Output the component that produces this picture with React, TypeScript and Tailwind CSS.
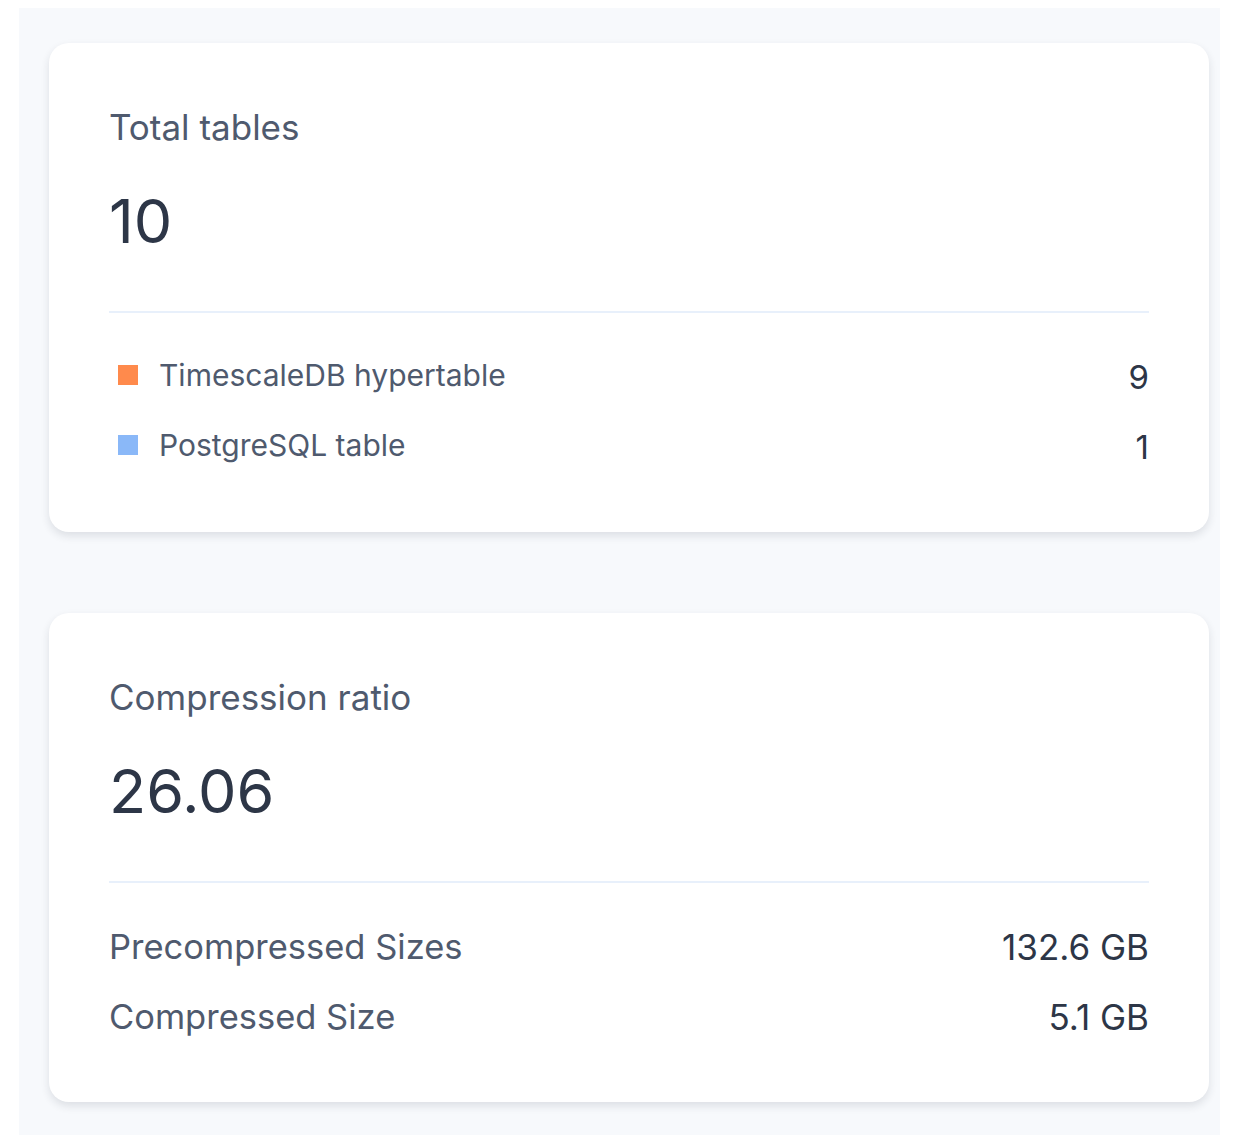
import React from 'react';

interface LegendRow {
  label: string;
  value: string;
  color?: string;
}

interface StatCardProps {
  title: string;
  value: string;
  rows: LegendRow[];
}

const StatCard: React.FC<StatCardProps> = ({ title, value, rows }) => {
  const hasLegend = rows.some((r) => r.color);
  return (
    <div
      className={
        hasLegend
          ? 'rounded-[20px] bg-white px-[60px] pb-[67px] pt-[64px] shadow-[0_4px_8px_rgba(30,41,59,0.12)]'
          : 'rounded-[20px] bg-white px-[60px] pb-[65px] pt-[64px] shadow-[0_4px_8px_rgba(30,41,59,0.12)]'
      }
    >
      <p className="text-[35px] leading-[40px] text-[#4f5a6e]">{title}</p>
      <h4 className="mt-[38px] text-[61px] leading-[72px] text-[#2d3647]">{value}</h4>
      <div className="mt-[54px] h-[2px] bg-[#e8f0fb]" />
      <div className={hasLegend ? 'mt-[42px] flex flex-col gap-[30px]' : 'mt-[44px] flex flex-col gap-[30px]'}>
        {rows.map((row) => (
          <div key={row.label} className="flex h-[40px] items-center justify-between">
            <div className="flex items-center">
              {row.color && <span className="ml-[9px] mr-[21px] size-[20px]" style={{ backgroundColor: row.color }} />}
              <span className={row.color ? 'text-[30px] text-[#4f5a6e]' : 'text-[34.5px] text-[#4f5a6e]'}>{row.label}</span>
            </div>
            <span className={row.color ? 'mt-[6px] text-[33px] text-[#2d3647]' : 'text-[35px] text-[#2d3647]'}>{row.value}</span>
          </div>
        ))}
      </div>
    </div>
  );
};

export default function App() {
  return (
    <div className="min-h-screen bg-white pt-[8px] font-['Inter',sans-serif]" style={{ height: 1144 }}>
      <div className="ml-[19px] mr-[18px] flex flex-col gap-[81px] bg-[#f7f9fc] pb-[33px] pl-[30px] pr-[11px] pt-[35px]">
        <StatCard
          title="Total tables"
          value="10"
          rows={[
            { label: 'TimescaleDB hypertable', value: '9', color: '#ff8a4c' },
            { label: 'PostgreSQL table', value: '1', color: '#8ab8f8' },
          ]}
        />
        <StatCard
          title="Compression ratio"
          value="26.06"
          rows={[
            { label: 'Precompressed Sizes', value: '132.6 GB' },
            { label: 'Compressed Size', value: '5.1 GB' },
          ]}
        />
      </div>
    </div>
  );
}
